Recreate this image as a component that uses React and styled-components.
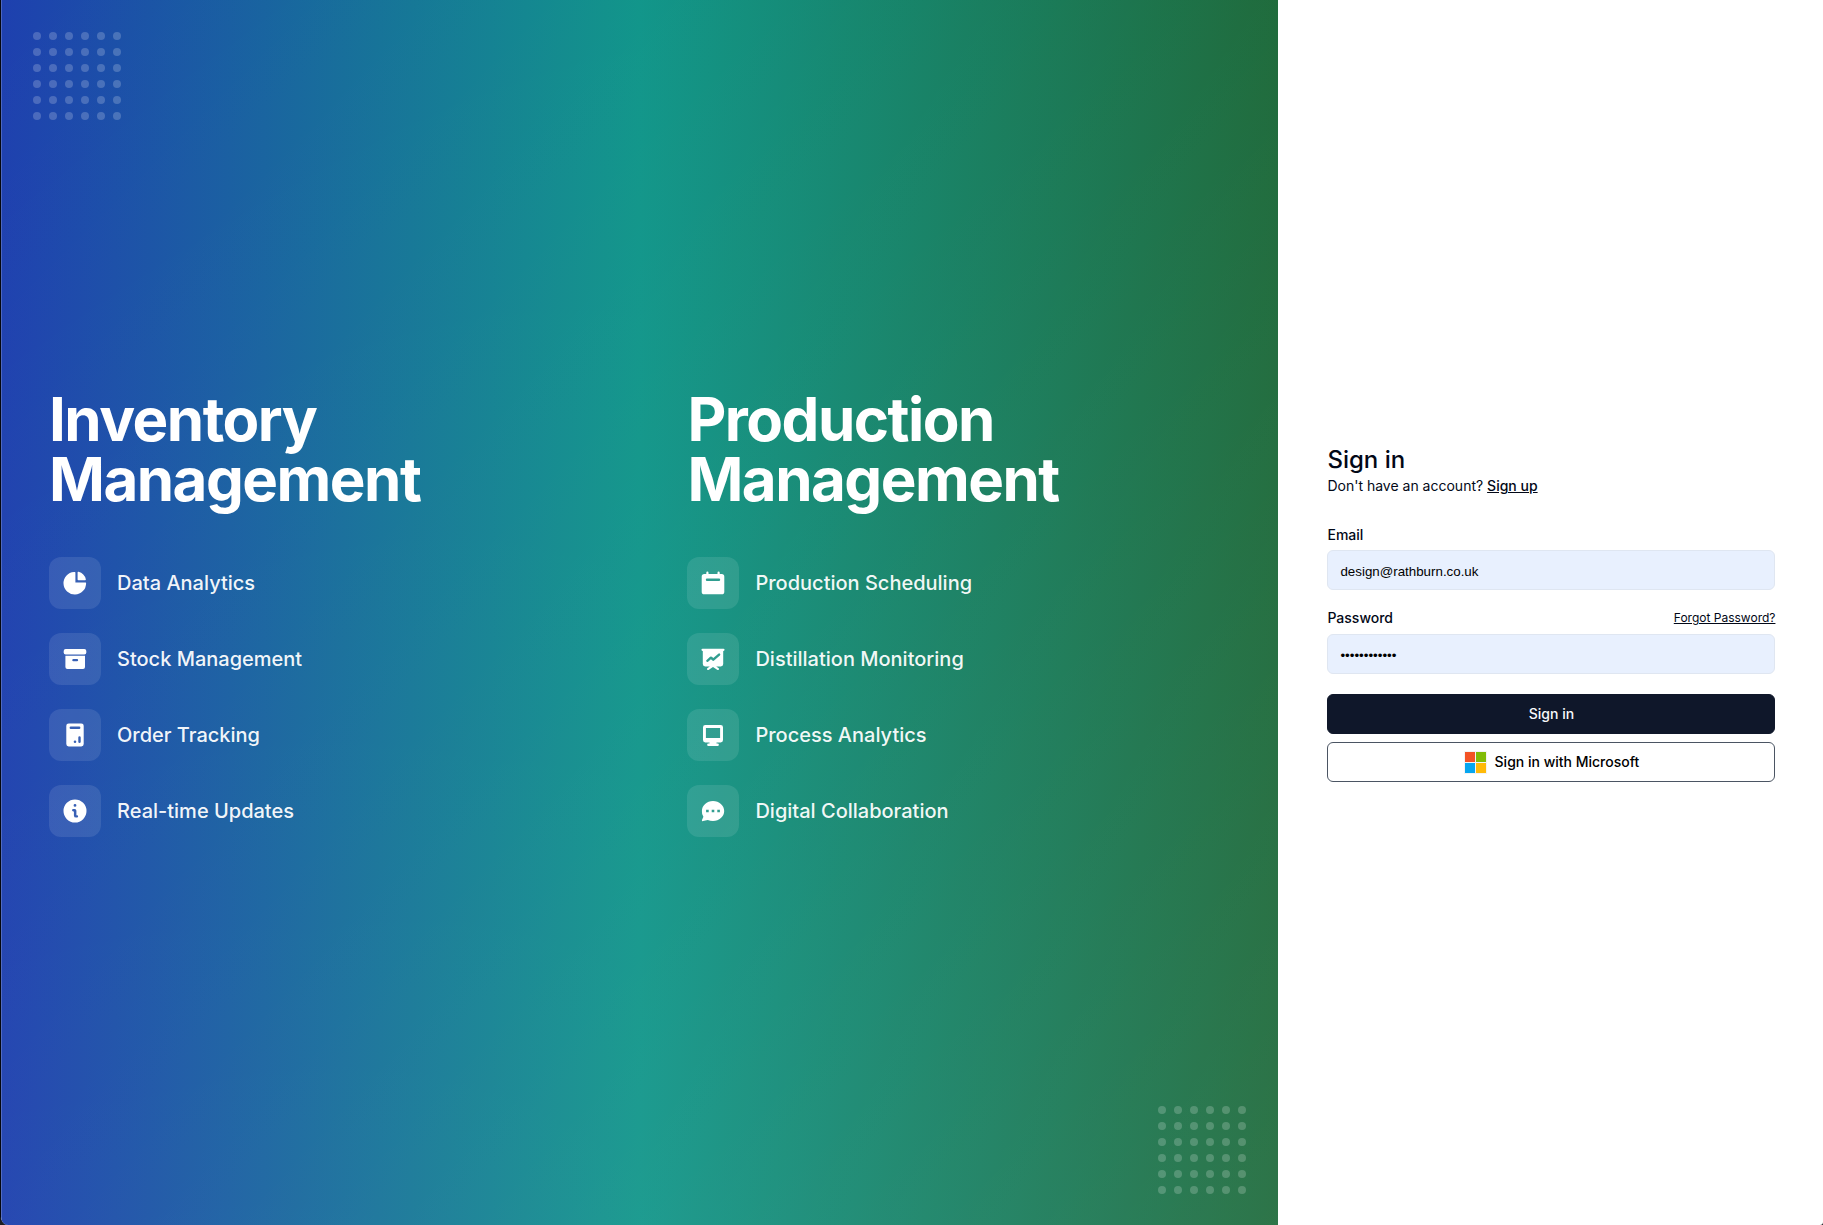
import React from "react";
import styled, { createGlobalStyle } from "styled-components";

const GlobalStyle = createGlobalStyle`
  *, *::before, *::after { box-sizing: border-box; }
  html, body, #root { height: 100%; }
  body {
    margin: 0;
    overflow: hidden;
    background: #1c1f24;
    font-family: Inter, "Liberation Sans", sans-serif;
    color: #020817;
    -webkit-font-smoothing: antialiased;
  }
  h1, h2, p, ul { margin: 0; padding: 0; }
`;

const Page = styled.main`
  display: flex;
  height: 100vh;
  border-left: 1px solid #05070d;
  border-radius: 0 0 3px 8px;
  overflow: hidden;
  background: #ffffff;
`;

const Showcase = styled.section`
  position: relative;
  display: grid;
  grid-template-columns: 638.45px 638.55px;
  flex-shrink: 0;
  box-shadow: inset 1px 0 0 rgba(255, 255, 255, 0.2);
  background:
    linear-gradient(
      to bottom right,
      rgba(255, 255, 255, 0),
      rgba(255, 255, 255, 0.042) 50%,
      rgba(255, 255, 255, 0.1)
    ),
    linear-gradient(to right, #1e40af, #0d9488 50%, #166534);
`;

const Column = styled.div`
  display: flex;
  flex-direction: column;
  justify-content: center;
  gap: 48px;
  padding: 0 48px;
`;

const Heading = styled.h1`
  font-size: 60px;
  line-height: 60px;
  font-weight: 700;
  letter-spacing: -0.025em;
  color: #ffffff;
`;

const Features = styled.ul`
  display: flex;
  flex-direction: column;
  gap: 24px;
  list-style: none;
`;

const Feature = styled.li`
  display: flex;
  align-items: center;
  gap: 16px;
  font-size: 20px;
  line-height: 28px;
  font-weight: 500;
  color: rgba(255, 255, 255, 0.95);
`;

const IconTile = styled.span`
  display: flex;
  width: 52px;
  height: 52px;
  align-items: center;
  justify-content: center;
  border-radius: 12px;
  background: rgba(255, 255, 255, 0.1);
  color: #ffffff;
`;

const DotGrid = styled.div`
  position: absolute;
  ${(p) => (p.$corner === "top" ? "top: 32px; left: 32px;" : "bottom: 31px; right: 32px;")}
  display: grid;
  grid-template-columns: repeat(6, 8px);
  gap: 8px;
`;

const Dot = styled.span`
  height: 8px;
  border-radius: 50%;
  background: rgba(255, 255, 255, 0.2);
`;

const AuthPane = styled.section`
  flex: 1;
  display: flex;
  align-items: center;
  justify-content: center;
  padding-left: 1.9px;
`;

const Form = styled.form`
  width: 448px;
  display: flex;
  flex-direction: column;
`;

const Title = styled.h2`
  font-size: 24px;
  line-height: 32px;
  font-weight: 500;
  padding-top: 1px;
`;

const Prompt = styled.p`
  font-size: 14px;
  line-height: 20px;
  margin-bottom: 32px;
`;

const Link = styled.a`
  color: inherit;
  text-decoration: underline;
  font-size: ${(p) => p.$size || 14}px;
  font-weight: ${(p) => p.$weight || 400};
`;

const Field = styled.div`
  display: flex;
  flex-direction: column;
  gap: 8px;
  margin-bottom: 20px;
`;

const FieldHead = styled.div`
  display: flex;
  justify-content: space-between;
  align-items: center;
  height: ${(p) => p.$height}px;
  line-height: 14px;
`;

const Label = styled.label`
  font-size: 14px;
  line-height: 14px;
  font-weight: 500;
`;

const Input = styled.input`
  height: 40px;
  width: 100%;
  padding: 2px 12px 0;
  border: 1px solid #dfe6f1;
  border-radius: 6px;
  background: #e8f0fe;
  color: #000000;
  font-family: "Liberation Sans", Arial, sans-serif;
  font-size: 13.333px;
  outline: none;
`;

const Button = styled.button`
  display: flex;
  align-items: center;
  justify-content: center;
  gap: 8px;
  height: 40px;
  padding: 0;
  border-radius: 6px;
  font-family: inherit;
  font-size: 14px;
  line-height: 20px;
  font-weight: 500;
  border: 1px solid ${(p) => (p.$outline ? "#4b5563" : "#0f172a")};
  background: ${(p) => (p.$outline ? "#ffffff" : "#0f172a")};
  color: ${(p) => (p.$outline ? "#000000" : "#f8fafc")};
  & + & { margin-top: 8px; }
`;

const Svg = ({ children }) => (
  <svg width="24" height="24" viewBox="0 0 24 24" fill="currentColor" aria-hidden="true">
    {children}
  </svg>
);

const PieIcon = () => (
  <Svg>
    <path d="M11.7.9a.7.7 0 0 1 .7.7v9.8h9.9a.7.7 0 0 1 .8.8A11.3 11.3 0 1 1 11 .9Z" />
    <path d="M14.6 1.6a.8.8 0 0 1 1-.8 10.4 10.4 0 0 1 7.2 7.4.8.8 0 0 1-.8 1h-6.6a.8.8 0 0 1-.8-.8Z" />
  </Svg>
);

const ArchiveIcon = () => (
  <Svg>
    <rect x="0.7" y="2" width="22.6" height="5.4" rx="2" />
    <path
      fillRule="evenodd"
      d="M2.4 8.8h19.6v11.2a2 2 0 0 1-2 2H4.4a2 2 0 0 1-2-2ZM10.4 12a1.15 1.15 0 0 0 0 2.3h3.6a1.15 1.15 0 0 0 0-2.3Z"
    />
  </Svg>
);

const OrderIcon = () => (
  <Svg>
    <path
      fillRule="evenodd"
      d="M5.7.4h12.6a2.4 2.4 0 0 1 2.4 2.4v18.3a2.4 2.4 0 0 1-2.4 2.4H5.7a2.4 2.4 0 0 1-2.4-2.4V2.8A2.4 2.4 0 0 1 5.7.4ZM7.8 3.5a1.2 1.2 0 0 0 0 2.4h8.4a1.2 1.2 0 0 0 0-2.4ZM12 17.4a1.3 1.3 0 1 0 0 2.6 1.3 1.3 0 0 0 0-2.6ZM16.5 13.2a1.2 1.2 0 0 0-1.2 1.2v4.4a1.2 1.2 0 0 0 2.4 0v-4.4a1.2 1.2 0 0 0-1.2-1.2Z"
    />
  </Svg>
);

const InfoIcon = () => (
  <Svg>
    <path
      fillRule="evenodd"
      d="M12 .5a11.5 11.5 0 1 1 0 23 11.5 11.5 0 0 1 0-23ZM12 5a1.4 1.4 0 1 0 0 2.8A1.4 1.4 0 0 0 12 5ZM10.2 10.1a1.15 1.15 0 0 0 0 2.3h.7v4a2.2 2.2 0 0 0 2.2 2.2h.9a1.15 1.15 0 0 0 0-2.3h-.6v-4.5a1.7 1.7 0 0 0-1.7-1.7Z"
    />
  </Svg>
);

const CalendarIcon = () => (
  <Svg>
    <path
      fillRule="evenodd"
      d="M6.4.6a1.1 1.1 0 0 1 1.1 1.1V3h9V1.7a1.1 1.1 0 0 1 2.2 0V3h2a2.6 2.6 0 0 1 2.6 2.6v15.1a2.6 2.6 0 0 1-2.6 2.6H3.3a2.6 2.6 0 0 1-2.6-2.6V5.6A2.6 2.6 0 0 1 3.3 3h2V1.7A1.1 1.1 0 0 1 6.4.6ZM6 7.6A1.2 1.2 0 0 0 6 10h12a1.2 1.2 0 0 0 0-2.4Z"
    />
  </Svg>
);

const PresentationIcon = () => (
  <Svg>
    <path
      fillRule="evenodd"
      d="M1.5 1.8h21a.9.9 0 0 1 0 2.1h-.3v13.2a2.4 2.4 0 0 1-2.4 2.4h-4.6l2.5 1.7a1.1 1.1 0 0 1-1.2 1.8L12 20 7.5 23a1.1 1.1 0 0 1-1.2-1.8l2.5-1.7H4.2a2.4 2.4 0 0 1-2.4-2.4V3.9h-.3a.9.9 0 0 1 0-2.1ZM17.3 6.7l-5 4.4-1.5-1.3a1.3 1.3 0 0 0-1.7 0l-3.5 3.1a1.15 1.15 0 0 0 1.5 1.8l2.8-2.4 1.5 1.3a1.3 1.3 0 0 0 1.7 0l5.8-5.1a1.15 1.15 0 0 0-1.6-1.8Z"
    />
  </Svg>
);

const MonitorIcon = () => (
  <Svg>
    <path
      fillRule="evenodd"
      d="M4.3 2h15.4A2.3 2.3 0 0 1 22 4.3v12.8a2.3 2.3 0 0 1-2.3 2.3h-4.2v1.2h1.1a1.2 1.2 0 0 1 0 2.5H7.4a1.2 1.2 0 0 1 0-2.5h1.1v-1.2H4.3A2.3 2.3 0 0 1 2 17.1V4.3A2.3 2.3 0 0 1 4.3 2ZM4.9 5v10h14.2V5Z"
    />
  </Svg>
);

const ChatIcon = () => (
  <Svg>
    <path
      fillRule="evenodd"
      d="M12 2c6.2 0 11.2 4.5 11.2 10S18.2 22 12 22c-1.9 0-3.7-.4-5.2-1.1L2 22.1a.8.8 0 0 1-1-1.1l1.4-3.2A9.2 9.2 0 0 1 .9 12C.9 6.5 5.8 2 12 2ZM5.1 10.7v2.6h2.6v-2.6ZM10.7 10.7v2.6h2.6v-2.6ZM16.3 10.7v2.6h2.6v-2.6Z"
    />
  </Svg>
);

const MicrosoftLogo = () => (
  <svg width="23" height="23" viewBox="0 0 23 23" aria-hidden="true">
    <path fill="#f3f3f3" d="M0 0h23v23H0z" />
    <path fill="#f35325" d="M1 1h10v10H1z" />
    <path fill="#81bc06" d="M12 1h10v10H12z" />
    <path fill="#05a6f0" d="M1 12h10v10H1z" />
    <path fill="#ffba08" d="M12 12h10v10H12z" />
  </svg>
);

const columns = [
  {
    name: "Inventory",
    items: [
      [PieIcon, "Data Analytics"],
      [ArchiveIcon, "Stock Management"],
      [OrderIcon, "Order Tracking"],
      [InfoIcon, "Real-time Updates"],
    ],
  },
  {
    name: "Production",
    items: [
      [CalendarIcon, "Production Scheduling"],
      [PresentationIcon, "Distillation Monitoring"],
      [MonitorIcon, "Process Analytics"],
      [ChatIcon, "Digital Collaboration"],
    ],
  },
];

const Dots = ({ corner }) => (
  <DotGrid $corner={corner}>
    {Array.from({ length: 36 }, (_, i) => (
      <Dot key={i} />
    ))}
  </DotGrid>
);

export default function App() {
  return (
    <>
      <GlobalStyle />
      <Page>
        <Showcase>
          <Dots corner="top" />
          {columns.map(({ name, items }) => (
            <Column key={name}>
              <Heading>
                {name}
                <br />
                Management
              </Heading>
              <Features>
                {items.map(([Icon, label]) => (
                  <Feature key={label}>
                    <IconTile>
                      <Icon />
                    </IconTile>
                    {label}
                  </Feature>
                ))}
              </Features>
            </Column>
          ))}
          <Dots corner="bottom" />
        </Showcase>
        <AuthPane>
          <Form onSubmit={(e) => e.preventDefault()}>
            <Title>Sign in</Title>
            <Prompt>
              Don't have an account? <Link $weight={500}>Sign up</Link>
            </Prompt>
            <Field>
              <FieldHead $height={14}>
                <Label htmlFor="email">Email</Label>
              </FieldHead>
              <Input id="email" type="email" defaultValue="design@rathburn.co.uk" />
            </Field>
            <Field>
              <FieldHead $height={16}>
                <Label htmlFor="password">Password</Label>
                <Link $size={12}>Forgot Password?</Link>
              </FieldHead>
              <Input id="password" type="password" defaultValue="abcdefghijkl" />
            </Field>
            <Button type="submit">Sign in</Button>
            <Button type="button" $outline>
              <MicrosoftLogo />
              Sign in with Microsoft
            </Button>
          </Form>
        </AuthPane>
      </Page>
    </>
  );
}
